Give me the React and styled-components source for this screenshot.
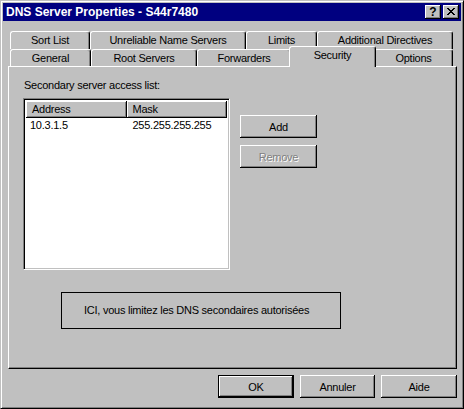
import React from 'react';
import styled, { createGlobalStyle, css } from 'styled-components';

const GlobalStyle = createGlobalStyle`
  html, body {
    margin: 0;
    padding: 0;
    background: #c0c0c0;
  }
  body {
    font-family: "Liberation Sans", Arial, sans-serif;
    font-size: 11px;
    letter-spacing: -0.25px;
    color: #000;
  }
  * { box-sizing: border-box; }
`;

const Window = styled.div`
  width: 464px;
  height: 409px;
  background: #c0c0c0;
  border-style: solid;
  border-width: 1px;
  border-color: #c0c0c0 #000 #000 #c0c0c0;
  box-shadow: inset 1px 1px #fff, inset -1px -1px #808080;
  padding: 2px;
  display: flex;
  flex-direction: column;
`;

const TitleBar = styled.div`
  height: 18px;
  background: #000080;
  color: #fff;
  display: flex;
  align-items: center;
  padding: 0 2px 0 3px;
`;

const Title = styled.div`
  flex: 1;
  font-weight: bold;
  font-size: 12px;
  letter-spacing: 0;
  white-space: nowrap;
`;

const Controls = styled.div`
  display: flex;
  gap: 2px;
`;

const bevel = css`
  background: #c0c0c0;
  box-shadow: inset -1px -1px #000, inset 1px 1px #fff, inset -2px -2px #808080;
`;

const CaptionButton = styled.div`
  ${bevel};
  width: 16px;
  height: 14px;
  color: #000;
  display: flex;
  align-items: center;
  justify-content: center;
  font-weight: bold;
  font-size: 12px;
  letter-spacing: 0;
  padding-bottom: 1px;
`;

const Body = styled.div`
  flex: 1;
  display: flex;
  flex-direction: column;
  padding: 10px 4px 0 5px;
`;

const TabStrip = styled.div`
  display: flex;
  flex-direction: column;
  padding: 0 2px;
`;

const TabRow = styled.div`
  display: flex;
  height: ${p => p.$h}px;
`;

const Tab = styled.div`
  width: ${p => p.$w}px;
  height: 18px;
  flex: none;
  background: #c0c0c0;
  border-top: 1px solid #fff;
  border-left: 1px solid #fff;
  border-right: 1px solid #000;
  border-radius: 3px 3px 0 0;
  box-shadow: inset -1px 0 #808080;
  display: flex;
  align-items: center;
  justify-content: center;
  white-space: nowrap;
  padding-bottom: 1px;

  ${p => p.$active && css`
    position: relative;
    z-index: 1;
    height: 21px;
    margin: -3px -2px -1px;
    width: ${p.$w + 4}px;
    padding-bottom: 4px;
  `}
`;

const Panel = styled.div`
  height: 303px;
  border-style: solid;
  border-width: 1px;
  border-color: #fff #000 #000 #fff;
  box-shadow: inset -1px -1px #808080;
  padding: 12px 14px 0 14px;
  display: flex;
  flex-direction: column;
`;

const Label = styled.div`
  padding-left: 1px;
  margin-bottom: 6px;
  line-height: 13px;
`;

const ListArea = styled.div`
  display: flex;
  gap: 10px;
`;

const ListBox = styled.div`
  width: 207px;
  height: 172px;
  background: #fff;
  border-style: solid;
  border-width: 1px;
  border-color: #808080 #fff #fff #808080;
  box-shadow: inset 1px 1px #000, inset -1px -1px #c0c0c0;
  padding: 2px;
`;

const HeaderRow = styled.div`
  display: flex;
  height: 17px;
`;

const HeaderCell = styled.div`
  ${bevel};
  width: ${p => p.$w}px;
  padding-left: 6px;
  display: flex;
  align-items: center;
  padding-bottom: 1px;
`;

const Row = styled.div`
  display: flex;
  height: 14px;
  align-items: center;
`;

const Cell = styled.div`
  width: ${p => p.$w}px;
  padding-left: ${p => p.$pad}px;
`;

const SideButtons = styled.div`
  display: flex;
  flex-direction: column;
  gap: 7px;
  padding-top: 17px;
`;

const Button = styled.div`
  ${bevel};
  width: ${p => p.$w || 77}px;
  height: 23px;
  display: flex;
  align-items: center;
  justify-content: center;
  color: ${p => (p.$disabled ? '#808080' : '#000')};
  text-shadow: ${p => (p.$disabled ? '1px 1px #fff' : 'none')};

  ${p => p.$default && css`
    box-shadow: inset 0 0 0 1px #000, inset -2px -2px #000, inset 2px 2px #fff, inset -3px -3px #808080;
  `}
`;

const InfoBox = styled.div`
  width: 280px;
  height: 37px;
  margin: 22px 0 0 38px;
  border: 1px solid #000;
  display: flex;
  align-items: center;
  padding: 0 0 1px 22px;
`;

const Footer = styled.div`
  display: flex;
  justify-content: flex-end;
  gap: 6px;
  padding-top: 6px;
`;

function CloseGlyph() {
  return (
    <svg width="8" height="7" viewBox="0 0 8 7" shapeRendering="crispEdges">
      <path d="M0 0h2v1h-2zM6 0h2v1h-2zM1 1h2v1h-2zM5 1h2v1h-2zM2 2h4v1h-4zM3 3h2v1h-2zM2 4h4v1h-4zM1 5h2v1h-2zM5 5h2v1h-2zM0 6h2v1h-2zM6 6h2v1h-2z" fill="#000" />
    </svg>
  );
}

const backTabs = [
  { label: 'Sort List', w: 80 },
  { label: 'Unreliable Name Servers', w: 156 },
  { label: 'Limits', w: 71 },
  { label: 'Additional Directives', w: 136 },
];

const frontTabs = [
  { label: 'General', w: 81 },
  { label: 'Root Servers', w: 106 },
  { label: 'Forwarders', w: 94 },
  { label: 'Security', w: 83, active: true },
  { label: 'Options', w: 79 },
];

export default function App() {
  return (
    <>
      <GlobalStyle />
      <Window>
        <TitleBar>
          <Title>DNS Server Properties - S44r7480</Title>
          <Controls>
            <CaptionButton>?</CaptionButton>
            <CaptionButton><CloseGlyph /></CaptionButton>
          </Controls>
        </TitleBar>
        <Body>
          <TabStrip>
            <TabRow $h={18}>
              {backTabs.map(t => <Tab key={t.label} $w={t.w}>{t.label}</Tab>)}
            </TabRow>
            <TabRow $h={17}>
              {frontTabs.map(t => (
                <Tab key={t.label} $w={t.w} $active={t.active}>{t.label}</Tab>
              ))}
            </TabRow>
          </TabStrip>
          <Panel>
            <Label>Secondary server access list:</Label>
            <ListArea>
              <ListBox>
                <HeaderRow>
                  <HeaderCell $w={101}>Address</HeaderCell>
                  <HeaderCell $w={101}>Mask</HeaderCell>
                </HeaderRow>
                <Row>
                  <Cell $w={101} $pad={4}>10.3.1.5</Cell>
                  <Cell $w={101} $pad={6}>255.255.255.255</Cell>
                </Row>
              </ListBox>
              <SideButtons>
                <Button>Add</Button>
                <Button $disabled>Remove</Button>
              </SideButtons>
            </ListArea>
            <InfoBox>ICI, vous limitez les DNS secondaires autorisées</InfoBox>
          </Panel>
          <Footer>
            <Button $w={76} $default>OK</Button>
            <Button $w={75}>Annuler</Button>
            <Button $w={76}>Aide</Button>
          </Footer>
        </Body>
      </Window>
    </>
  );
}
